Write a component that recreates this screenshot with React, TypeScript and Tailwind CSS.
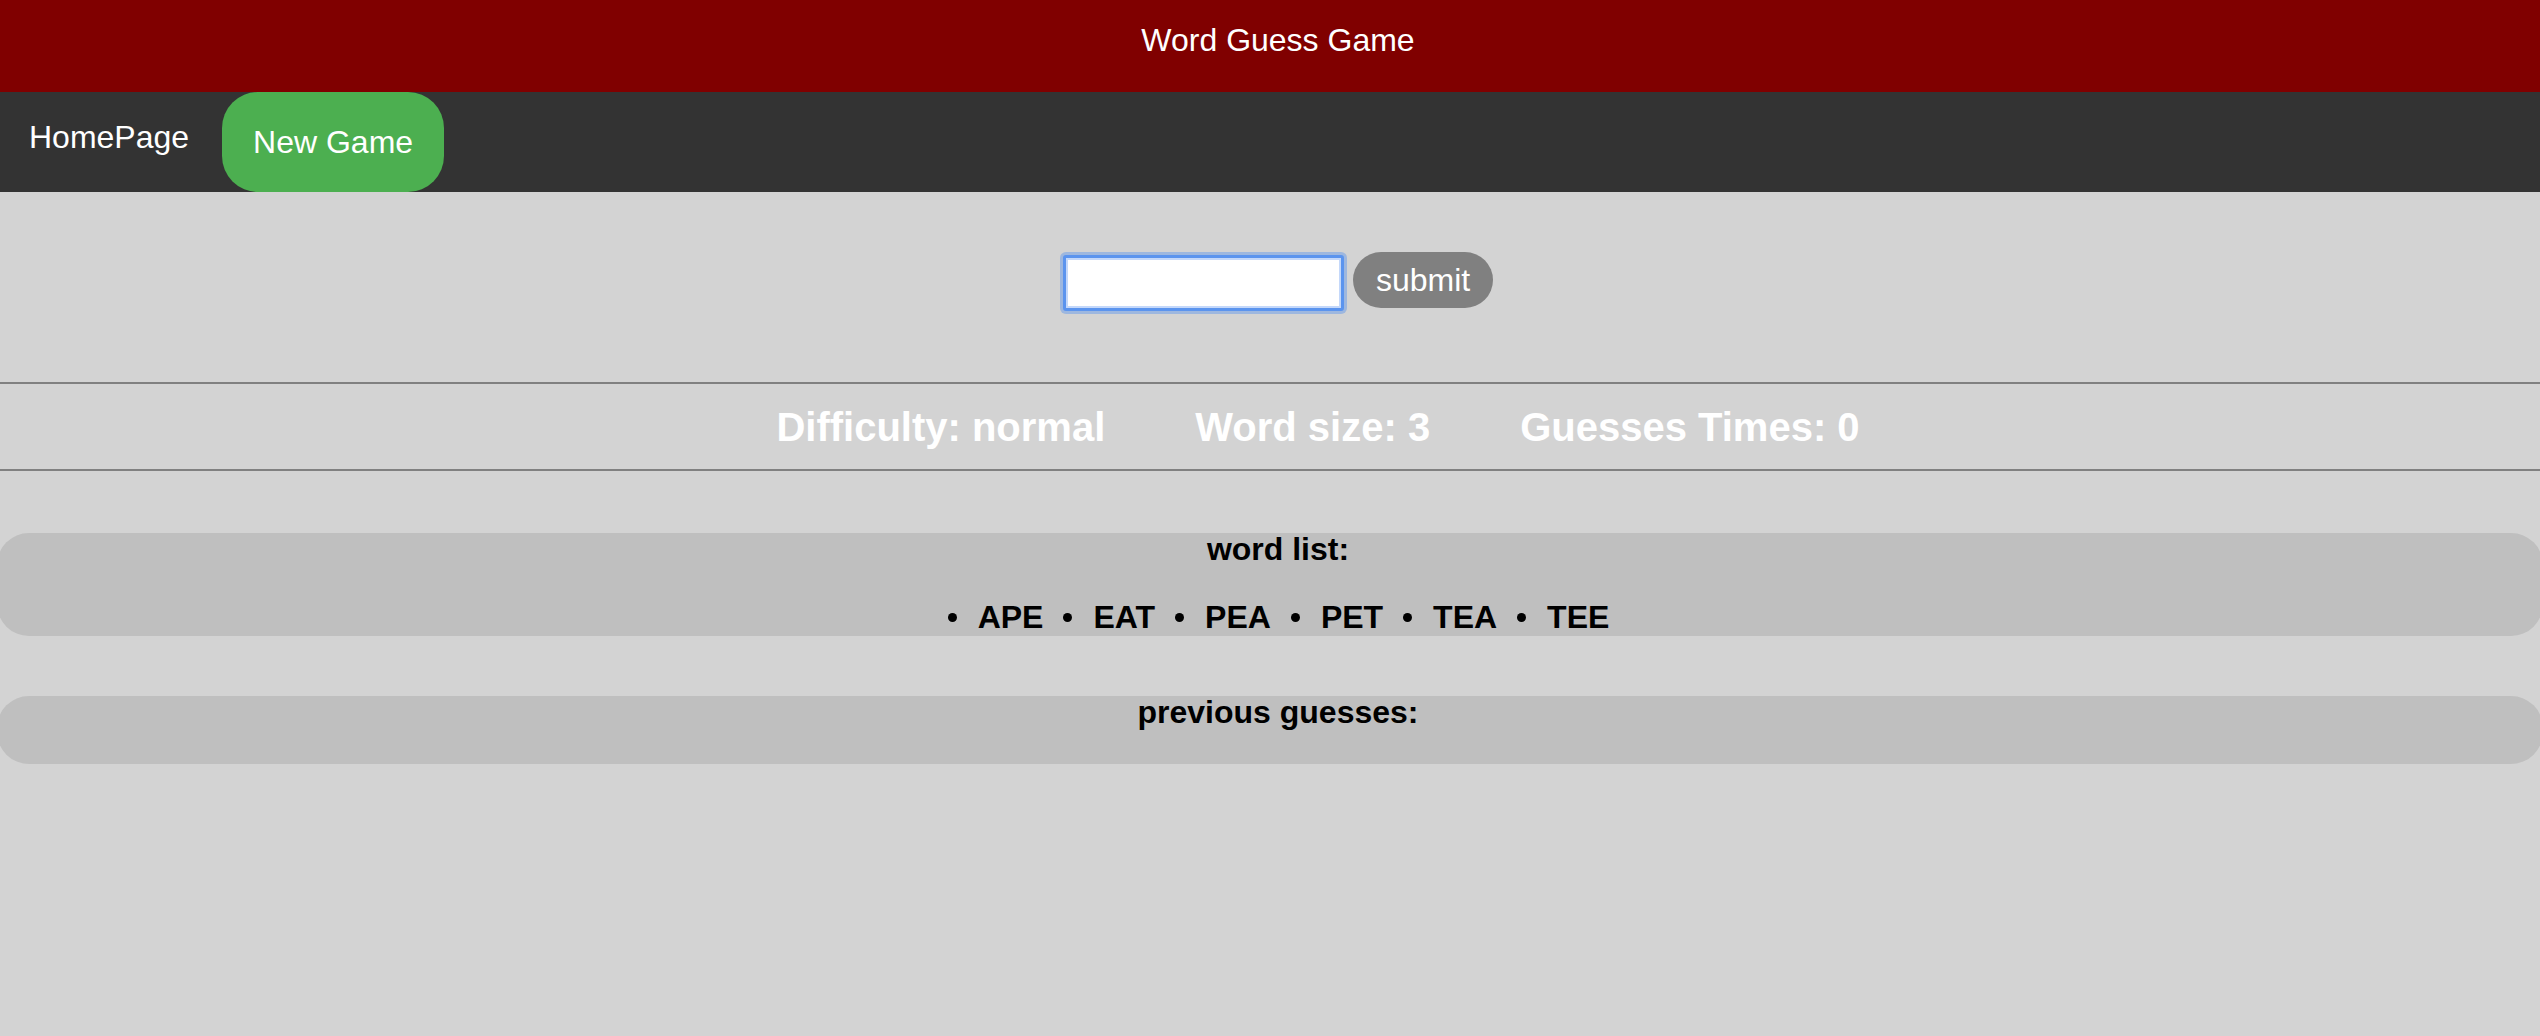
import { useState } from "react"

const WORDS = ["APE", "EAT", "PEA", "PET", "TEA", "TEE"]

function App() {
  const [guess, setGuess] = useState("")

  return (
    <div className="min-h-screen overflow-hidden bg-[#d3d3d3] font-['Liberation_Sans',Arial,sans-serif]">
      <header className="h-[92px] bg-[#800000] pl-4 pt-[22px] text-center text-[32px] leading-[37px] text-white">
        Word Guess Game
      </header>

      <nav className="flex h-[100px] bg-[#333333] text-[32px] text-white">
        <a className="pl-[29px] pr-[33px] pt-[27px] leading-[37px]">HomePage</a>
        <button className="h-full w-[222px] rounded-[36px] bg-[#4CAF50] leading-[37px] text-white">
          New Game
        </button>
      </nav>

      <main className="pt-[60px]">
        <div className="flex items-start justify-center gap-[9px] pl-4">
          <input
            value={guess}
            onChange={(e) => setGuess(e.target.value)}
            className="mt-[3px] h-[56px] w-[281px] rounded-[3px] border-[3px] border-[#5b94ee] bg-white px-2 text-[32px] shadow-[0_0_0_3px_rgba(91,148,238,0.45),inset_0_0_0_2px_#c4d8fa] outline-none"
          />
          <button className="h-[56px] w-[140px] rounded-full bg-[#808080] text-[32px] leading-[37px] text-white">
            submit
          </button>
        </div>

        <div className="mt-[71px] flex h-[89px] items-center justify-center gap-[90px] border-y-2 border-[#808080] pl-[96px] text-[40px] font-bold leading-[46px] text-white">
          <span>Difficulty: normal</span>
          <span>Word size: 3</span>
          <span>Guesses Times: 0</span>
        </div>

        <section className="-mx-[3px] mt-[62px] h-[103px] rounded-[32px] bg-[#bfbfbf] text-[32px] font-bold text-black">
          <h3 className="pl-4 text-center leading-[33px]">word list:</h3>
          <ul className="mt-[33px] flex justify-center gap-[20px] pl-[17px] leading-[37px]">
            {WORDS.map((w) => (
              <li key={w} className="flex items-center gap-[21px]">
                <span className="h-[9px] w-[9px] rounded-full bg-black" />
                {w}
              </li>
            ))}
          </ul>
        </section>

        <section className="-mx-[3px] mt-[60px] h-[68px] rounded-[32px] bg-[#bfbfbf] text-[32px] font-bold text-black">
          <h3 className="pl-4 text-center leading-[33px]">previous guesses:</h3>
        </section>
      </main>
    </div>
  )
}

export default App
